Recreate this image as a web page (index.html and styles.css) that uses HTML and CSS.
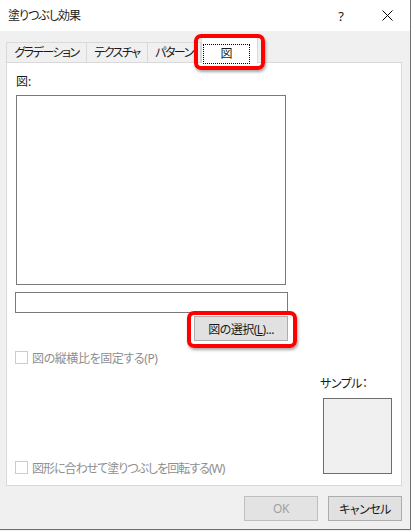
FILE: index.html
```html
<!DOCTYPE html>
<html lang="ja">
<head>
  <meta charset="UTF-8">
  <title>塗りつぶし効果</title>
  <link rel="stylesheet" href="styles.css">
</head>
<body>
  <div class="dialog">
    <!-- Title bar -->
    <div class="titlebar">
      <span class="title">塗りつぶし効果</span>
      <span class="title-btn">?</span>
      <span class="title-btn">
        <svg width="11" height="11" viewBox="0 0 11 11"><path d="M0.5 0.5L10.5 10.5M10.5 0.5L0.5 10.5" stroke="#000" stroke-width="1"/></svg>
      </span>
    </div>

    <!-- Tabs -->
    <div class="tabs">
      <div class="tab tab-grad">グラデーション</div>
      <div class="tab tab-tex">テクスチャ</div>
      <div class="tab tab-pat">パターン</div>
      <div class="tab tab-active mark"><span class="focus">図</span></div>
    </div>

    <div class="panel">
      <div class="label">図:</div>
      <div class="picture"></div>
      <div class="path-input"></div>
      <div class="select-row">
        <button class="btn mark-btn">図の選択(<u>L</u>)...</button>
      </div>

      <div class="lower">
        <div class="options">
          <div class="check"><span class="box"></span>図の縦横比を固定する(P)</div>
          <div class="check check-long"><span class="box"></span>図形に合わせて塗りつぶしを回転する(W)</div>
        </div>
        <div class="sample">
          <div class="sample-label">サンプル：</div>
          <div class="sample-box"></div>
        </div>
      </div>
    </div>

    <div class="footer">
      <button class="btn btn-foot" disabled>OK</button>
      <button class="btn btn-foot">キャンセル</button>
    </div>
  </div>
</body>
</html>
```

FILE: styles.css
```css
body {
  margin: 0;
  background: #f0f0f0;
  font-family: "Noto Sans", "Noto Sans CJK JP", sans-serif;
  font-size: 12px;
  font-feature-settings: "palt";
  color: #1a1a1a;
}

.dialog {
  width: 410px;
  height: 529px;
  background: #f0f0f0;
  border-right: 1px solid #707070;
  border-bottom: 1px solid #707070;
}

.titlebar {
  height: 31px;
  background: #fff;
  display: flex;
  align-items: center;
  padding-left: 8px;
}

.title {
  flex: 1;
  line-height: 16px;
  letter-spacing: -1px;
}

.title-btn {
  width: 46px;
  height: 31px;
  display: flex;
  align-items: center;
  justify-content: center;
  font-size: 13px;
}

.tabs {
  height: 31px;
  display: flex;
  align-items: flex-end;
  padding-left: 6px;
}

.tab {
  height: 20px;
  line-height: 20px;
  text-align: center;
  border-top: 1px solid #d9d9d9;
  border-left: 1px solid #d9d9d9;
  box-sizing: border-box;
  letter-spacing: -1.5px;
  white-space: nowrap;
}

.tab-grad { width: 80px; }
.tab-tex { width: 61px; }
.tab-pat { width: 54px; border-right: 1px solid #d9d9d9; }

.tab-active {
  position: relative;
  width: 57px;
  height: 26px;
  margin-bottom: -1px;
  background: #fff;
  border: 1px solid #d9d9d9;
  border-bottom: none;
  display: flex;
  align-items: flex-end;
  justify-content: center;
  letter-spacing: 0;
  z-index: 1;
}

.focus {
  width: 45px;
  height: 18px;
  line-height: 18px;
  margin-left: -6px;
  outline: 1px dotted #000;
  text-align: center;
}

/* red highlight marks */
.mark::after,
.mark-btn::after {
  content: "";
  position: absolute;
  border: 4px solid #f00;
  border-radius: 7px;
  box-shadow: 1px 2px 3px rgba(0, 0, 0, 0.35);
}

.mark::after {
  top: -4px;
  left: -8px;
  right: -8px;
  bottom: -7px;
}

.panel {
  height: 424px;
  box-sizing: border-box;
  margin-left: 6px;
  width: 396px;
  background: #fff;
  border: 1px solid #d9d9d9;
  padding: 11px 9px 0 9px;
}

.label {
  line-height: 16px;
}

.picture {
  width: 270px;
  height: 190px;
  box-sizing: border-box;
  margin-top: 5px;
  border: 1px solid #7a7a7a;
}

.path-input {
  width: 273px;
  height: 21px;
  box-sizing: border-box;
  margin: 7px 0 0 -1px;
  border: 1px solid #7a7a7a;
}

.select-row {
  width: 272px;
  display: flex;
  justify-content: flex-end;
  margin-top: 3px;
}

.btn {
  font-family: inherit;
  font-size: 12px;
  font-feature-settings: "palt";
  letter-spacing: -0.5px;
  background: #e1e1e1;
  border: 1px solid #adadad;
  color: #1a1a1a;
  padding: 0;
  height: 25px;
  box-sizing: border-box;
}

.mark-btn {
  position: relative;
  width: 94px;
}

.mark-btn::after {
  top: -6px;
  left: -8px;
  right: -10px;
  bottom: -8px;
}

.lower {
  display: flex;
  height: 123px;
  margin-top: 10px;
}

.options {
  flex: 1;
  display: flex;
  flex-direction: column;
  justify-content: space-between;
}

.check {
  display: flex;
  align-items: center;
  height: 13px;
  margin-left: -1px;
  color: #8e8e8e;
  white-space: nowrap;
  letter-spacing: -0.4px;
}

.check-long {
  letter-spacing: -1px;
}

.box {
  width: 13px;
  height: 13px;
  box-sizing: border-box;
  border: 1px solid #cccccc;
  margin-right: 4px;
  flex-shrink: 0;
}

.sample {
  width: 72px;
}

.sample-label {
  line-height: 16px;
  margin-top: 25px;
  white-space: nowrap;
  letter-spacing: -0.5px;
}

.sample-box {
  width: 69px;
  height: 76px;
  box-sizing: border-box;
  margin: 6px 0 0 3px;
  background: #f0f0f0;
  border: 1px solid #6d6d6d;
}

.footer {
  display: flex;
  justify-content: flex-end;
  gap: 10px;
  padding: 10px 8px 0 0;
}

.btn-foot {
  width: 74px;
}

.btn-foot:disabled {
  color: #a0a0a0;
  border-color: #bfbfbf;
  background: #e3e3e3;
}
```
